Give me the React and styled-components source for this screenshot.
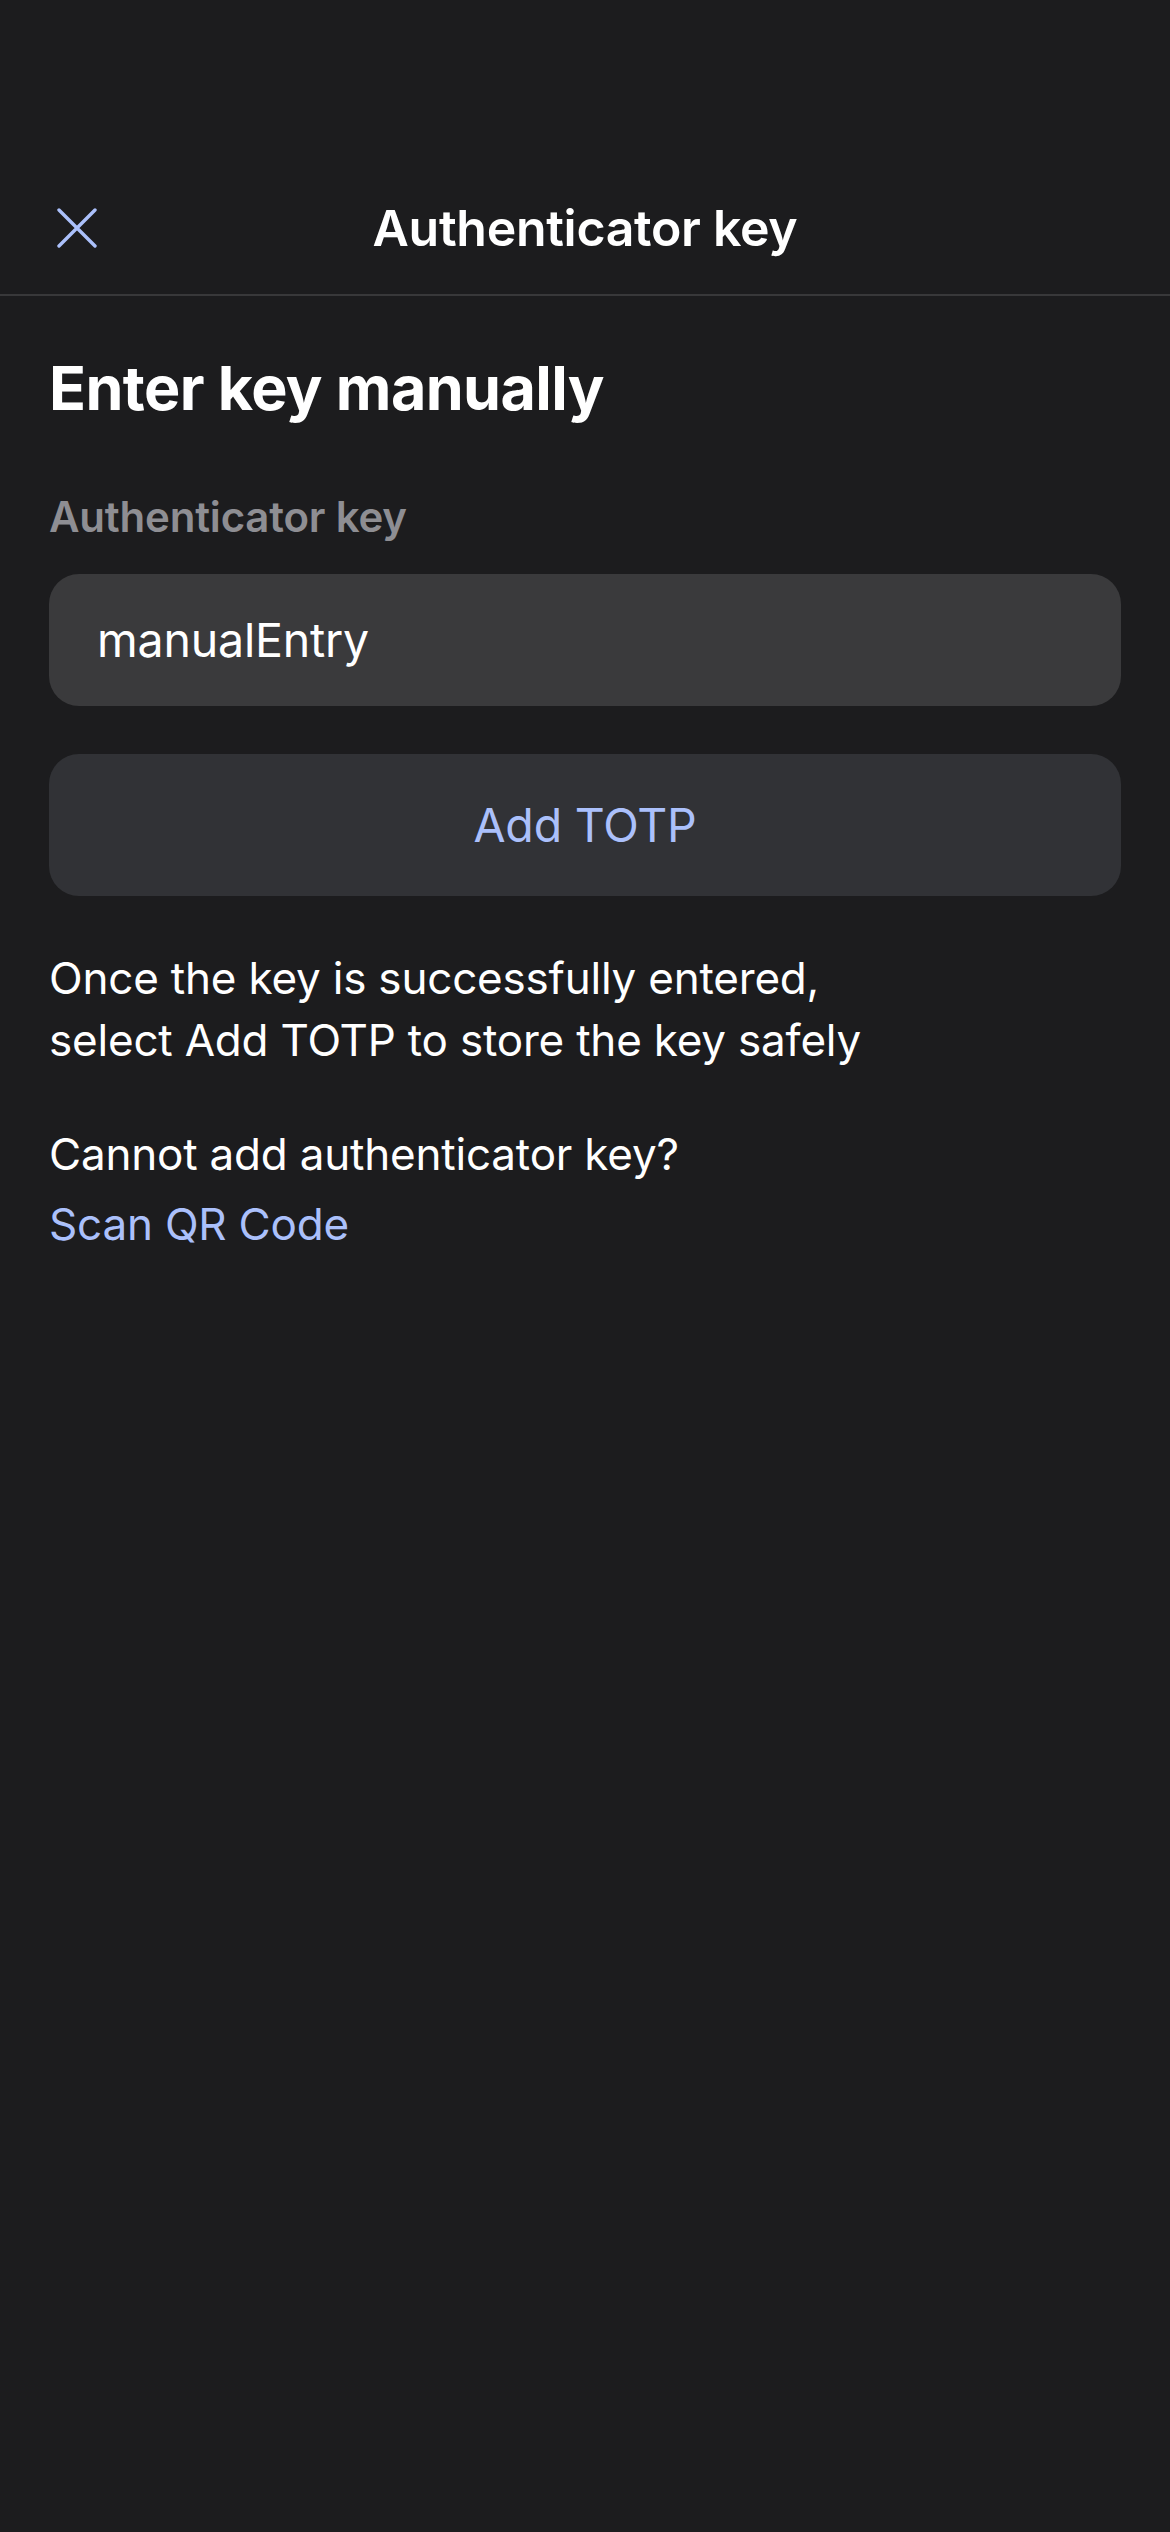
import React from "react";
import styled, { createGlobalStyle } from "styled-components";

const Global = createGlobalStyle`
  html, body {
    margin: 0;
    padding: 0;
    background: #1c1c1e;
  }
  body {
    font-family: Inter, "Noto Sans", "Liberation Sans", sans-serif;
    -webkit-font-smoothing: antialiased;
  }
`;

const Screen = styled.div`
  min-height: 2532px;
  background: #1c1c1e;
  color: #ffffff;
  display: flex;
  flex-direction: column;
`;

const StatusSpace = styled.div`
  height: 162px;
`;

const NavBar = styled.header`
  position: relative;
  height: 132px;
  display: flex;
  align-items: center;
  justify-content: center;
  border-bottom: 2px solid #38383a;
`;

const CloseButton = styled.button`
  position: absolute;
  left: 50px;
  top: 50%;
  transform: translateY(-50%);
  width: 54px;
  height: 54px;
  padding: 0;
  border: none;
  background: transparent;
  display: flex;
  align-items: center;
  justify-content: center;
  color: #abc0fb;
`;

const NavTitle = styled.h1`
  margin: 0;
  font-size: 50px;
  line-height: 58px;
  font-weight: 600;
  letter-spacing: -0.3px;
  color: #ffffff;
`;

const Content = styled.main`
  display: flex;
  flex-direction: column;
  padding: 55px 49px 0;
`;

const Heading = styled.h2`
  margin: 0;
  font-size: 61px;
  line-height: 74px;
  font-weight: 700;
  letter-spacing: -0.6px;
`;

const FieldLabel = styled.label`
  margin-top: 68px;
  font-size: 42px;
  line-height: 48px;
  font-weight: 600;
  color: #8e8e93;
  letter-spacing: -0.2px;
`;

const Field = styled.div`
  margin-top: 33px;
  height: 132px;
  border-radius: 30px;
  background: #3a3a3c;
  display: flex;
  align-items: center;
  padding: 0 48px;
`;

const FieldValue = styled.span`
  font-size: 46.5px;
  line-height: 56px;
  color: #ffffff;
  letter-spacing: -0.2px;
`;

const PrimaryButton = styled.button`
  margin-top: 48px;
  height: 142px;
  border: none;
  border-radius: 30px;
  background: #313236;
  color: #abc0fb;
  font-family: inherit;
  font-size: 46.5px;
  font-weight: 400;
  letter-spacing: -0.2px;
  display: flex;
  align-items: center;
  justify-content: center;
`;

const Paragraph = styled.p`
  margin: ${(p) => (p.$first ? "51px" : "52px")} 0 0;
  font-size: 44px;
  line-height: 62px;
  font-weight: 400;
  color: #ffffff;
  letter-spacing: -0.2px;
`;

const LinkText = styled.a`
  display: block;
  margin-top: 8px;
  font-size: 44px;
  line-height: 62px;
  color: #abc0fb;
  text-decoration: none;
  letter-spacing: -0.2px;
`;

const CloseIcon = () => (
  <svg width="40" height="40" viewBox="0 0 40 40" fill="none">
    <path
      d="M2 2 L38 38 M38 2 L2 38"
      stroke="currentColor"
      strokeWidth="3.4"
      strokeLinecap="round"
    />
  </svg>
);

export default function App() {
  return (
    <>
      <Global />
      <Screen>
        <StatusSpace />
        <NavBar>
          <CloseButton aria-label="Close">
            <CloseIcon />
          </CloseButton>
          <NavTitle>Authenticator key</NavTitle>
        </NavBar>
        <Content>
          <Heading>Enter key manually</Heading>
          <FieldLabel>Authenticator key</FieldLabel>
          <Field>
            <FieldValue>manualEntry</FieldValue>
          </Field>
          <PrimaryButton>Add TOTP</PrimaryButton>
          <Paragraph $first>
            Once the key is successfully entered,
            <br />
            select Add TOTP to store the key safely
          </Paragraph>
          <Paragraph>
            Cannot add authenticator key?
            <LinkText href="#">Scan QR Code</LinkText>
          </Paragraph>
        </Content>
      </Screen>
    </>
  );
}
